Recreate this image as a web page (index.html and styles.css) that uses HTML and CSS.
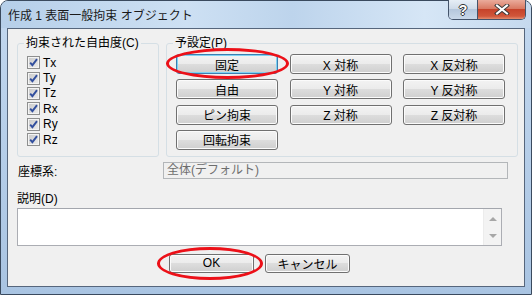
FILE: index.html
```html
<!DOCTYPE html>
<html lang="ja">
<head>
    <meta charset="UTF-8">
    <meta name="viewport" content="width=device-width, initial-scale=1.0">
    <title>表面一般拘束</title>
    <link rel="stylesheet" href="styles.css">
</head>
<body>
    <div class="window">
        <div class="titlebar">
            <span class="title">作成 1 表面一般拘束 オブジェクト</span>
            <div class="caption-buttons">
                <span class="cap help">?</span>
                <span class="cap close">
                    <svg width="16" height="11" viewBox="0 0 16 11">
                        <path d="M3 1.5 L13 9.5 M13 1.5 L3 9.5" stroke="#3b3b3b" stroke-width="4" stroke-linecap="square"/>
                        <path d="M3 1.5 L13 9.5 M13 1.5 L3 9.5" stroke="#ffffff" stroke-width="2" stroke-linecap="square"/>
                    </svg>
                </span>
            </div>
        </div>

        <div class="client">
            <div class="groups">
                <fieldset class="group dof">
                    <legend>拘束された自由度(C)</legend>
                    <div class="check"><span class="box"><svg width="11" height="11" viewBox="0 0 11 11"><path d="M2.2 5.6 L4.4 8.2 L9 2.2" fill="none" stroke="#324f9e" stroke-width="1.9"/></svg></span>Tx</div>
                    <div class="check"><span class="box"><svg width="11" height="11" viewBox="0 0 11 11"><path d="M2.2 5.6 L4.4 8.2 L9 2.2" fill="none" stroke="#324f9e" stroke-width="1.9"/></svg></span>Ty</div>
                    <div class="check"><span class="box"><svg width="11" height="11" viewBox="0 0 11 11"><path d="M2.2 5.6 L4.4 8.2 L9 2.2" fill="none" stroke="#324f9e" stroke-width="1.9"/></svg></span>Tz</div>
                    <div class="check"><span class="box"><svg width="11" height="11" viewBox="0 0 11 11"><path d="M2.2 5.6 L4.4 8.2 L9 2.2" fill="none" stroke="#324f9e" stroke-width="1.9"/></svg></span>Rx</div>
                    <div class="check"><span class="box"><svg width="11" height="11" viewBox="0 0 11 11"><path d="M2.2 5.6 L4.4 8.2 L9 2.2" fill="none" stroke="#324f9e" stroke-width="1.9"/></svg></span>Ry</div>
                    <div class="check"><span class="box"><svg width="11" height="11" viewBox="0 0 11 11"><path d="M2.2 5.6 L4.4 8.2 L9 2.2" fill="none" stroke="#324f9e" stroke-width="1.9"/></svg></span>Rz</div>
                </fieldset>

                <fieldset class="group preset">
                    <legend>予設定(P)</legend>
                    <div class="preset-grid">
                        <div class="mark">
                            <button class="btn default">固定</button>
                            <span class="ring ring-fix"></span>
                        </div>
                        <button class="btn">X 対称</button>
                        <button class="btn">X 反対称</button>
                        <button class="btn">自由</button>
                        <button class="btn">Y 対称</button>
                        <button class="btn">Y 反対称</button>
                        <button class="btn">ピン拘束</button>
                        <button class="btn">Z 対称</button>
                        <button class="btn">Z 反対称</button>
                        <button class="btn">回転拘束</button>
                    </div>
                </fieldset>
            </div>

            <div class="coord-row">
                <span class="coord-label">座標系:</span>
                <div class="field">全体(デフォルト)</div>
            </div>

            <div class="desc-label">説明(D)</div>
            <div class="memo">
                <div class="memo-text"></div>
                <div class="scrollbar">
                    <span class="arrow up"></span>
                    <span class="arrow down"></span>
                </div>
            </div>

            <div class="actions">
                <div class="mark">
                    <button class="btn action">OK</button>
                    <span class="ring ring-ok"></span>
                </div>
                <button class="btn action">キャンセル</button>
            </div>
        </div>
    </div>
</body>
</html>
```

FILE: styles.css
```css
/* styles.css */
body {
    margin: 0;
    padding: 0;
    background-color: #ffffff;
    font-family: "Liberation Sans", "Noto Sans CJK JP", sans-serif;
    font-size: 12px;
    color: #000;
}

.window {
    box-sizing: border-box;
    width: 532px;
    height: 295px;
    border: 1px solid #3a4a5e;
    border-radius: 8px 8px 0 0;
    background: linear-gradient(#c3d8ef, #a9c4e2);
    padding: 0 6px 7px 6px;
    display: flex;
    flex-direction: column;
}

/* title bar */
.titlebar {
    height: 27px;
    display: flex;
    align-items: flex-start;
    background: linear-gradient(90deg, #b6cfe9 0%, #cde0f3 35%, #bdd4ec 55%, #d6e6f6 80%, #c5d9ee 100%);
    margin: 0 -6px;
    padding: 0 6px;
    border-radius: 7px 7px 0 0;
}

.title {
    margin-top: 8px;
    padding-left: 1px;
    line-height: 14px;
    color: #1a1a1a;
}

.caption-buttons {
    margin-left: auto;
    margin-top: -1px;
    margin-right: -1px;
    display: flex;
    height: 20px;
    border: 1px solid #44546b;
    border-top: none;
    border-radius: 0 0 5px 5px;
    overflow: hidden;
    box-sizing: border-box;
}

.cap {
    display: flex;
    align-items: center;
    justify-content: center;
    height: 19px;
}

.help {
    width: 28px;
    border-right: 1px solid #44546b;
    background: linear-gradient(#e6eef6, #cfdbe9 45%, #b5c7dc 50%, #c9d8e9);
    color: #fff;
    font-weight: bold;
    font-size: 14px;
    text-shadow: -1px 0 #333, 1px 0 #333, 0 -1px #333, 0 1px #333;
}

.close {
    width: 47px;
    background: linear-gradient(#eaab9b, #d97a63 45%, #c6432a 50%, #d0563a 85%, #e48c6e);
}

/* client area */
.client {
    flex: 1;
    border: 1px solid #56667c;
    background-color: #f0f0f0;
    padding: 7px 6px 0 9px;
}

.groups {
    display: flex;
    gap: 7px;
}

.group {
    margin: 0;
    border: 1px solid #d5dfe5;
    border-radius: 3px;
    padding: 0 9px;
}

.group legend {
    padding: 0 2px;
    margin-left: -3px;
    line-height: 14px;
}

.dof {
    width: 142px;
    box-sizing: border-box;
    padding-top: 5px;
}

.preset {
    flex: 1;
    padding-top: 4px;
    padding-bottom: 6px;
}

.check {
    display: flex;
    align-items: center;
    height: 15.4px;
    gap: 3px;
}

.box {
    box-sizing: border-box;
    width: 13px;
    height: 13px;
    border: 1px solid #8e8f8f;
    background: linear-gradient(135deg, #c9c9c9, #eeeeee);
    box-shadow: inset 0 0 0 1px #f4f4f4;
    display: flex;
}

.preset-grid {
    display: grid;
    grid-template-columns: repeat(3, 102px);
    grid-auto-rows: 20px;
    column-gap: 11.5px;
    row-gap: 5.3px;
}

.btn {
    box-sizing: border-box;
    width: 102px;
    height: 20px;
    padding: 0;
    border: 1px solid #707070;
    border-radius: 3px;
    background: linear-gradient(#f3f3f3 0%, #ebebeb 50%, #dddddd 50%, #cfcfcf 100%);
    box-shadow: inset 0 0 0 1px #fbfbfb;
    font-family: inherit;
    font-size: 12px;
    color: #000;
}

.btn.default {
    border-color: #3c7fb1;
    box-shadow: inset 0 0 0 1px #7fd2f2;
}

.mark {
    position: relative;
}

.ring {
    position: absolute;
    border: 3px solid #ec1018;
    border-radius: 50%;
    pointer-events: none;
}

.ring-fix {
    left: -10px;
    right: -11px;
    top: -6px;
    bottom: -5px;
}

.ring-ok {
    left: -12px;
    right: -9px;
    top: -7px;
    bottom: -7px;
}

/* coordinate row */
.coord-row {
    display: flex;
    align-items: center;
    margin-top: 5px;
    margin-right: 10px;
}

.coord-label {
    width: 146px;
    padding-left: 1px;
    box-sizing: border-box;
}

.field {
    flex: 1;
    height: 17px;
    box-sizing: border-box;
    border: 1px solid #b3b6b9;
    background-color: #f0f0f0;
    color: #6d6d6d;
    padding-left: 3px;
    line-height: 15px;
}

/* description */
.desc-label {
    margin-top: 13px;
    line-height: 14px;
}

.memo {
    display: flex;
    height: 38px;
    box-sizing: border-box;
    margin-top: 2px;
    margin-right: 16px;
    border: 1px solid #abadb3;
    border-top-color: #a3a6ad;
    background-color: #fff;
}

.memo-text {
    flex: 1;
}

.scrollbar {
    width: 17px;
    background-color: #f3f3f3;
    border-left: 1px solid #ececec;
    display: flex;
    flex-direction: column;
    justify-content: space-between;
    align-items: center;
    padding: 8px 0 7px;
}

.arrow {
    width: 0;
    height: 0;
    border-left: 4px solid transparent;
    border-right: 4px solid transparent;
}

.arrow.up {
    border-bottom: 4px solid #a7a7a7;
}

.arrow.down {
    border-top: 4px solid #a7a7a7;
}

/* bottom buttons */
.actions {
    display: flex;
    justify-content: center;
    gap: 11px;
    margin-top: 8px;
    margin-right: 16px;
}

.btn.action {
    width: 85px;
    height: 19px;
}
```
